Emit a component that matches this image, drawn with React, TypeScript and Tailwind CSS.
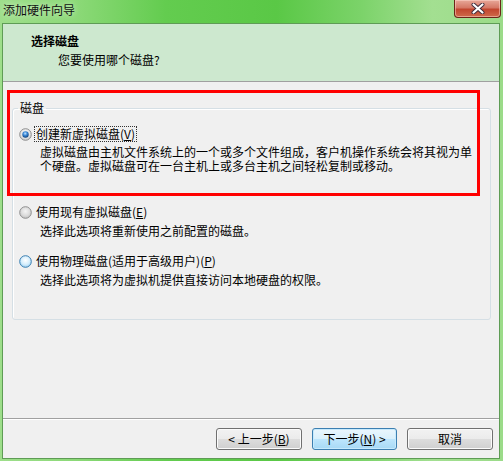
import React from "react";

const FONT = '"Noto Sans CJK SC", "Noto Sans", sans-serif';

function Radio({ kind }: { kind: "checked" | "grey" | "hover" }) {
  const id = "rg-" + kind;
  return (
    <svg width="13" height="13" viewBox="0 0 13 13" className="shrink-0">
      <defs>
        <radialGradient id={id + "-bg"} cx="50%" cy="40%" r="60%">
          {kind === "hover" ? (
            <>
              <stop offset="0%" stopColor="#ffffff" />
              <stop offset="60%" stopColor="#d6eefc" />
              <stop offset="100%" stopColor="#9fd2f2" />
            </>
          ) : kind === "grey" ? (
            <>
              <stop offset="0%" stopColor="#f4f4f4" />
              <stop offset="60%" stopColor="#dcdcdc" />
              <stop offset="100%" stopColor="#c2c2c2" />
            </>
          ) : (
            <>
              <stop offset="0%" stopColor="#ffffff" />
              <stop offset="60%" stopColor="#e6e6e6" />
              <stop offset="100%" stopColor="#c8c8c8" />
            </>
          )}
        </radialGradient>
        <radialGradient id={id + "-dot"} cx="45%" cy="35%" r="65%">
          <stop offset="0%" stopColor="#c4e4ff" />
          <stop offset="45%" stopColor="#3c8ad8" />
          <stop offset="100%" stopColor="#0d3f7a" />
        </radialGradient>
      </defs>
      <circle
        cx="6.5"
        cy="6.5"
        r="5.8"
        fill={`url(#${id}-bg)`}
        stroke={kind === "hover" ? "#3c7fb1" : "#8f8f8f"}
        strokeWidth="1"
      />
      {kind === "checked" && <circle cx="6.5" cy="6.5" r="3.2" fill={`url(#${id}-dot)`} />}
    </svg>
  );
}

function Option({
  kind,
  label,
  hotkey,
  focused,
  lines,
  descGap,
}: {
  kind: "checked" | "grey" | "hover";
  label: string;
  hotkey: string;
  focused?: boolean;
  lines: React.ReactNode[];
  descGap: string;
}) {
  return (
    <div className="flex flex-col">
      <div className="flex items-center h-[16px] pl-[6px]">
        <Radio kind={kind} />
        <span
          className={
            "ml-[2px] px-[1px] leading-[14px] border border-dotted " +
            (focused ? "border-[#333]" : "border-transparent")
          }
        >
          {label}(<span className="underline">{hotkey}</span>)
        </span>
      </div>
      <div className={"pl-[27px] leading-[14px] " + descGap}>
        {lines.map((l, i) => (
          <div key={i} className="whitespace-nowrap">
            {l}
          </div>
        ))}
      </div>
    </div>
  );
}

function Button({
  children,
  def,
  w,
}: {
  children: React.ReactNode;
  def?: boolean;
  w: string;
}) {
  return (
    <div
      className={
        "h-[22px] rounded-[3px] border flex items-center justify-center text-[12px] text-black " +
        w +
        " " +
        (def
          ? "border-[#3c7fb1] bg-[linear-gradient(to_bottom,#eaf6fd_0%,#d9f0fc_50%,#bee6fd_50%,#a7d9f5_100%)] shadow-[inset_0_0_0_1px_#c7eafd]"
          : "border-[#707070] bg-[linear-gradient(to_bottom,#f2f2f2_0%,#ebebeb_50%,#dddddd_50%,#cfcfcf_100%)] shadow-[inset_0_0_0_1px_#fbfbfb]")
      }
    >
      {children}
    </div>
  );
}

function P({ c }: { c: string }) {
  return <span className="inline-block w-[12px] text-left">{c}</span>;
}

export default function App() {
  return (
    <div
      className="relative w-[503px] h-[461px] overflow-hidden flex flex-col bg-[linear-gradient(90deg,#9ede8b_0%,#8cd978_15%,#63cc4f_33%,#5ac846_55%,#7cd36a_72%,#a3df91_86%,#9bdb89_100%)] text-[12px] text-black"
      style={{ fontFamily: FONT }}
    >
      {/* title bar */}
      <div className="h-[23px] flex items-start justify-between shrink-0">
        <div className="pl-[3px] pt-[2px] leading-[16px] text-[12px] text-[#111] [text-shadow:0_0_6px_rgba(255,255,255,0.7)]">
          添加硬件向导
        </div>
        <div className="mr-[2px] w-[47px] h-[18px] rounded-b-[4px] border border-t-0 border-[#6b2418] bg-[linear-gradient(to_bottom,#e8a899_0%,#d57866_45%,#c2462f_55%,#cf6a4a_100%)] shadow-[inset_0_0_0_1px_rgba(255,220,210,0.5)] flex items-center justify-center">
          <svg width="14" height="11" viewBox="0 0 14 11">
            <path d="M2.5 1.5 L11.5 9.5 M11.5 1.5 L2.5 9.5" stroke="#3b2a3a" strokeWidth="4" strokeLinecap="round" />
            <path d="M2.5 1.5 L11.5 9.5 M11.5 1.5 L2.5 9.5" stroke="#ffffff" strokeWidth="2.2" strokeLinecap="round" />
          </svg>
        </div>
      </div>

      {/* client */}
      <div className="ml-[2px] mr-[3px] mb-[2px] flex-1 flex flex-col border border-[#5e9c55] bg-[#f0f0f0]">
        {/* header */}
        <div className="h-[58px] shrink-0 bg-[#cde8cf] border-b border-[#a0a0a0] pl-[28px] pt-[9px]">
          <div className="font-bold leading-[16px]">选择磁盘</div>
          <div className="leading-[16px] mt-[3px] pl-[27px]">您要使用哪个磁盘?</div>
        </div>

        {/* body */}
        <div className="flex-1 pl-[9px] pr-[8px]">
          <fieldset className="mt-[19px] h-[219px] w-[479px] border border-[#d5dfe5] rounded-[3px] shadow-[inset_1px_1px_0_#ffffff]">
            <legend className="ml-[5px] px-[2px] leading-[14px]">磁盘</legend>
            <div className="pt-[11px] flex flex-col">
              <Option
                kind="checked"
                label="创建新虚拟磁盘"
                hotkey="V"
                focused
                descGap="mt-[3px]"
                lines={[
                  <>
                    虚拟磁盘由主机文件系统上的一个或多个文件组成<P c="，" />客户机操作系统会将其视为单
                  </>,
                  <>
                    个硬盘<P c="。" />虚拟磁盘可在一台主机上或多台主机之间轻松复制或移动。
                  </>,
                ]}
              />
              <div className="h-[31px]" />
              <Option
                kind="grey"
                label="使用现有虚拟磁盘"
                hotkey="E"
                descGap="mt-[4px]"
                lines={["选择此选项将重新使用之前配置的磁盘。"]}
              />
              <div className="h-[15px]" />
              <Option
                kind="hover"
                label="使用物理磁盘(适用于高级用户)"
                hotkey="P"
                descGap="mt-[4px]"
                lines={["选择此选项将为虚拟机提供直接访问本地硬盘的权限。"]}
              />
            </div>
          </fieldset>
        </div>

        {/* footer */}
        <div className="h-[40px] shrink-0 border-t border-[#a0a0a0] shadow-[inset_0_1px_0_#ffffff] flex justify-end items-start pt-[9px] pr-[6px] gap-[10px]">
          <Button w="w-[86px]">
            &lt; 上一步(<span className="underline">B</span>)
          </Button>
          <Button w="w-[85px]" def>
            下一步(<span className="underline">N</span>) &gt;
          </Button>
          <Button w="w-[86px]">取消</Button>
        </div>
      </div>

      {/* red annotation */}
      <div className="absolute left-[7px] top-[90px] w-[473px] h-[106px] border-[3px] border-[#ff0000] pointer-events-none" />
    </div>
  );
}
